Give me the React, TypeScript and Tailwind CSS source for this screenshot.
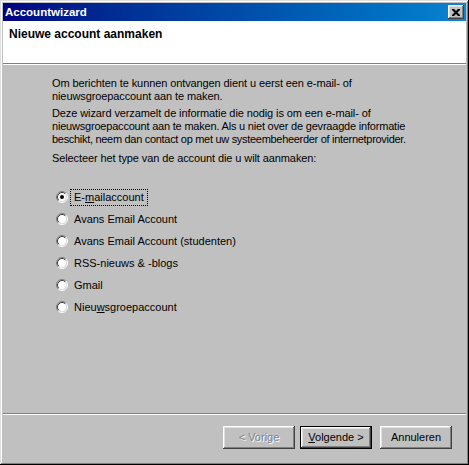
import React from 'react';

const font = { fontFamily: '"Liberation Sans", Arial, sans-serif' };

function Radio({ checked }: { checked?: boolean }) {
  return (
    <svg width="12" height="12" viewBox="0 0 12 12" className="shrink-0">
      <circle cx="6" cy="6" r="4.5" fill="#fff" />
      <path d="M2.11 9.89 A5.5 5.5 0 0 1 9.89 2.11" fill="none" stroke="#808080" strokeWidth="1" />
      <path d="M9.89 2.11 A5.5 5.5 0 0 1 2.11 9.89" fill="none" stroke="#fff" strokeWidth="1" />
      <path d="M2.82 9.18 A4.5 4.5 0 0 1 9.18 2.82" fill="none" stroke="#404040" strokeWidth="1" />
      <path d="M9.18 2.82 A4.5 4.5 0 0 1 2.82 9.18" fill="none" stroke="#dfdfdf" strokeWidth="1" />
      {checked && <circle cx="6" cy="6" r="2" fill="#000" />}
    </svg>
  );
}

const options: { label: React.ReactNode; checked?: boolean; focus?: boolean }[] = [
  { label: <>E-<u>m</u>ailaccount</>, checked: true, focus: true },
  { label: 'Avans Email Account' },
  { label: 'Avans Email Account (studenten)' },
  { label: 'RSS-nieuws & -blogs' },
  { label: 'Gmail' },
  { label: <>Nieu<u>w</u>sgroepaccount</> },
];

const raised =
  'shadow-[inset_-1px_-1px_#404040,inset_1px_1px_#fff,inset_-2px_-2px_#808080,inset_2px_2px_#dfdfdf]';

export default function App() {
  return (
    <div
      className="w-[469px] h-[465px] bg-[#c0c0c0] p-[3px] flex flex-col text-black shadow-[inset_-1px_-1px_#000,inset_1px_1px_#dfdfdf,inset_-2px_-2px_#808080,inset_2px_2px_#fff]"
      style={font}
    >
      {/* title bar */}
      <div className="h-[18px] flex items-center justify-between bg-gradient-to-r from-[#000080] to-[#1084d0] pl-[2px] pr-[2px]">
        <span className="text-white font-bold text-[11.5px] leading-[18px]">Accountwizard</span>
        <button className={`w-[16px] h-[14px] bg-[#c0c0c0] flex items-center justify-center ${raised}`}>
          <svg width="8" height="7" viewBox="0 0 8 7">
            <path d="M0 0h2l2 2 2-2h2v1l-2.5 2.5L8 6v1H6L4 5 2 7H0V6l2.5-2.5L0 1z" fill="#000" />
          </svg>
        </button>
      </div>

      {/* header */}
      <div className="h-[43px] bg-white border-b border-b-[#808080] shadow-[0_1px_0_#fff] pl-[6px] pt-[6px]">
        <div className="font-bold text-[12px] leading-[14px]">Nieuwe account aanmaken</div>
      </div>

      {/* body */}
      <div className="flex-1 flex flex-col mt-[1px] text-[11px] leading-[13px]">
        <div className="pl-[49px] pt-[12px] tracking-[-0.1px]">
          <p>
            Om berichten te kunnen ontvangen dient u eerst een e-mail- of
            <br />
            nieuwsgroepaccount aan te maken.
          </p>
          <p className="mt-[4px]">
            Deze wizard verzamelt de informatie die nodig is om een e-mail- of
            <br />
            <span className="tracking-[-0.2px]">
              nieuwsgroepaccount aan te maken. Als u niet over de gevraagde informatie
            </span>
            <br />
            <span className="tracking-[-0.3px]">
              beschikt, neem dan contact op met uw systeembeheerder of internetprovider.
            </span>
          </p>
          <p className="mt-[6px]">Selecteer het type van de account die u wilt aanmaken:</p>
        </div>

        <div className="pl-[53px] mt-[21px] flex flex-col">
          {options.map((o, i) => (
            <div key={i} className="h-[22px] flex items-center">
              <Radio checked={o.checked} />
              <span
                className={`ml-[2px] px-[3px] py-[2px] leading-[11px] border border-dotted ${
                  o.focus ? 'border-black' : 'border-transparent'
                }`}
              >
                {o.label}
              </span>
            </div>
          ))}
        </div>

        <div className="flex-1" />

        <div className="h-[2px] border-t border-t-[#808080] border-b border-b-white" />

        <div className="pt-[11px] pb-[13px] pr-[14px] flex justify-end">
          <button
            disabled
            className={`w-[72px] h-[23px] bg-[#c0c0c0] text-[#808080] [text-shadow:1px_1px_#fff] ${raised}`}
          >
            &lt; Vorige
          </button>
          <button className="ml-[5px] w-[72px] h-[23px] border border-black bg-[#c0c0c0] p-0">
            <div className={`w-full h-full flex items-center justify-center ${raised}`}>
              <span>
                <u>V</u>olgende &gt;
              </span>
            </div>
          </button>
          <button className={`ml-[8px] w-[72px] h-[23px] bg-[#c0c0c0] ${raised}`}>Annuleren</button>
        </div>
      </div>
    </div>
  );
}
